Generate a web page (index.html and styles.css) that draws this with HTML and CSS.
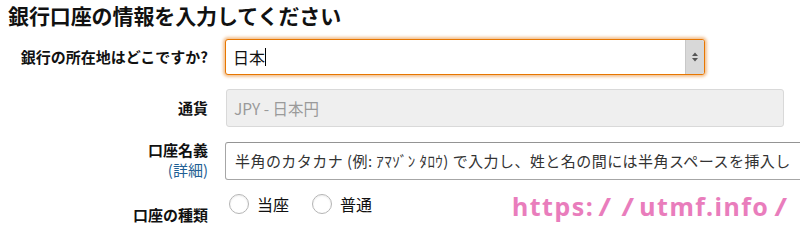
FILE: index.html
```html
<!DOCTYPE html>
<html lang="ja">
<head>
<meta charset="utf-8">
<link rel="stylesheet" href="styles.css">
</head>
<body>
<div class="page">
  <h1 class="title">銀行口座の情報を入力してください</h1>
  <div class="form">
    <div class="label row1">銀行の所在地はどこですか?</div>
    <div class="ctrl row1">
      <div class="select">
        <div class="select-val">日本<span class="caret"></span></div>
        <div class="select-arrow">
          <svg width="8" height="12" viewBox="0 0 8 12"><path d="M1 5 L4 1.5 L7 5 Z M1 7 L4 10.5 L7 7 Z" fill="#555"/></svg>
        </div>
      </div>
    </div>

    <div class="label row2">通貨</div>
    <div class="ctrl row2">
      <div class="input disabled">JPY - 日本円</div>
    </div>

    <div class="label row3">口座名義<br><a class="detail">(詳細)</a></div>
    <div class="ctrl row3">
      <div class="input name">半角のカタカナ (例: ｱﾏｿﾞﾝ ﾀﾛｳ) で入力し、姓と名の間には半角スペースを挿入し</div>
    </div>

    <div class="label row4">口座の種類</div>
    <div class="ctrl row4 radios">
      <span class="radio"></span><span class="rlabel">当座</span>
      <span class="radio r2"></span><span class="rlabel">普通</span>
    </div>
  </div>
  <div class="watermark">https:<span class="sl">/</span><span class="sl">/</span>utmf.info<span class="sl">/</span></div>
</div>
</body>
</html>
```
FILE: styles.css
```css
html, body {
  margin: 0;
  padding: 0;
  background: #fff;
  overflow: hidden;
  width: 800px;
  height: 236px;
}
.page {
  position: relative;
  width: 800px;
  height: 236px;
  overflow: hidden;
  font-family: "Noto Sans CJK JP", "Noto Sans", sans-serif;
  color: #111;
}
.title {
  margin: 0;
  padding: 0 0 0 8px;
  font-size: 21px;
  line-height: 30px;
  font-weight: bold;
  letter-spacing: -0.1px;
}
.form {
  display: grid;
  grid-template-columns: 200px 1fr;
  column-gap: 17px;
  padding-left: 8px;
  margin-top: 9px;
}
.label {
  text-align: right;
  font-weight: bold;
  font-size: 15px;
  line-height: 20px;
  white-space: nowrap;
}
.row1.label { padding-top: 8px; }
.row2.label { padding-top: 9px; }
.row3.label { margin-top: 13px; line-height: 20px; }
.row4.label { padding-top: 12px; }
.detail {
  font-weight: normal;
  font-size: 15px;
  color: #1f5f94;
}
.ctrl { min-width: 0; }
.row2 { margin-top: 14px; }
.row3 { margin-top: 15px; }
.row4 { margin-top: 13px; }
.select {
  width: 480px;
  height: 36px;
  box-sizing: border-box;
  border: 1px solid #e77600;
  border-radius: 3px;
  box-shadow: 0 0 3px 2px rgba(228, 121, 17, 0.45);
  display: flex;
  background: #fff;
}
.select-val {
  flex: 1;
  font-size: 16px;
  line-height: 34px;
  padding-left: 7px;
  display: flex;
  align-items: center;
}
.caret {
  display: inline-block;
  width: 1px;
  height: 18px;
  background: #000;
}
.select-arrow {
  width: 18px;
  background: #d8d8d8;
  border-left: 1px solid #c8c8c8;
  display: flex;
  align-items: center;
  justify-content: center;
  border-radius: 0 2px 2px 0;
}
.input {
  height: 38px;
  box-sizing: border-box;
  border-radius: 3px;
  padding-left: 7px;
  font-size: 15px;
  line-height: 36px;
  white-space: nowrap;
  overflow: hidden;
}
.disabled {
  width: 558px;
  margin-left: 1px;
  background: #efefef;
  border: 1px solid #d9d9d9;
  color: #9a9a9a;
  font-size: 15.5px;
}
.name {
  width: 620px;
  border: 1px solid #a6a6a6;
  border-top-color: #949494;
  color: #333;
  padding-left: 9px;
  letter-spacing: 0.45px;
}
.radios {
  display: flex;
  align-items: center;
  height: 22px;
  padding-left: 4px;
}
.radio {
  width: 18px;
  height: 18px;
  border: 1px solid #b5b5b5;
  border-radius: 50%;
  background: #fff;
  box-shadow: inset 0 1px 2px rgba(0,0,0,0.08);
}
.rlabel {
  font-size: 16px;
  margin-left: 8px;
  color: #111;
}
.r2 { margin-left: 23px; }
.watermark {
  position: absolute;
  left: 512px;
  top: 189px;
  font-family: "Noto Sans", sans-serif;
  font-weight: bold;
  font-size: 25px;
  line-height: 34px;
  color: #e97dbc;
  letter-spacing: 1.5px;
  white-space: nowrap;
}
.sl {
  display: inline-block;
  font-weight: 600;
  transform: scaleX(1.3);
  margin: 0 5px 0 6px;
}
```
